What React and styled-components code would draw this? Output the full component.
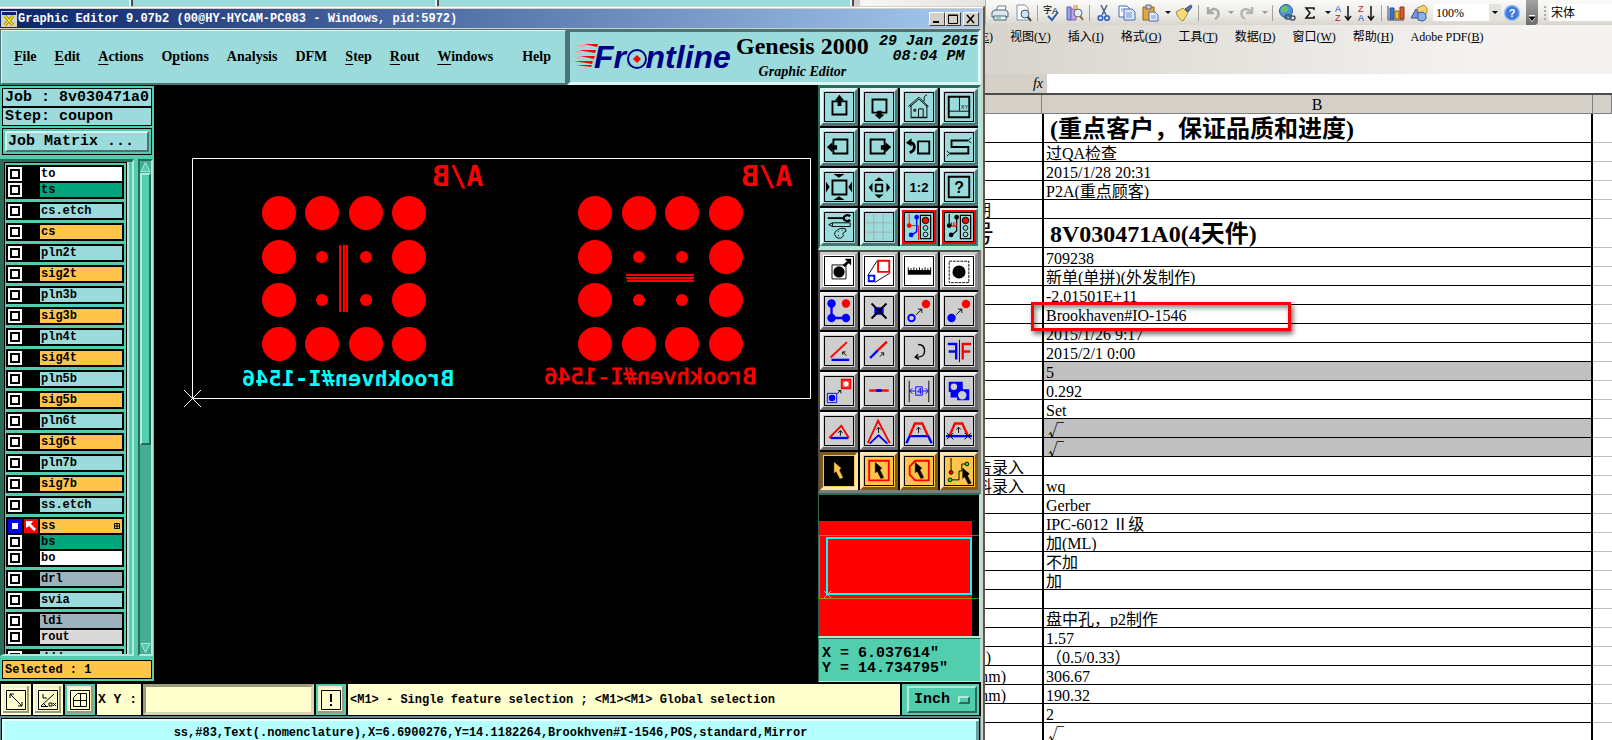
import React from "react";
import styled, { createGlobalStyle, css } from "styled-components";

const aqua = "#9cdbdb";
const teal = "#52ceae";
const tealDark = "#2b6b5a";
const tealLight = "#b2ead9";
const gold = "#ffc54a";
const cream = "#ffffce";
const face = "#d4d0c8";
const mono = '"Liberation Mono", "DejaVu Sans Mono", monospace';
const serif = '"Liberation Serif", "Noto Sans CJK SC", serif';

const layerGroups = [
  [["to", "#ffffff"], ["ts", "#00a57b"]],
  [["cs.etch", aqua]],
  [["cs", gold]],
  [["pln2t", aqua]],
  [["sig2t", gold]],
  [["pln3b", aqua]],
  [["sig3b", gold]],
  [["pln4t", aqua]],
  [["sig4t", gold]],
  [["pln5b", aqua]],
  [["sig5b", gold]],
  [["pln6t", aqua]],
  [["sig6t", gold]],
  [["pln7b", aqua]],
  [["sig7b", gold]],
  [["ss.etch", aqua]],
  [["ss", gold], ["bs", "#00a57b"], ["bo", "#ffffff"]],
  [["drl", "#9cb2bd"]],
  [["svia", aqua]],
  [["ldi", "#9cb2bd"], ["rout", "#d9d9d9"]],
  [["ddd", aqua]]
];

const menus = [
  ["F", "ile"],
  ["E", "dit"],
  ["A", "ctions"],
  ["", "O", "p", "tions"],
  ["", "Analysis"],
  ["", "DFM"],
  ["S", "tep"],
  ["R", "out"],
  ["W", "indows"]
];

const sheetMenus = [
  ["视图", "V"],
  ["插入", "I"],
  ["格式", "O"],
  ["工具", "T"],
  ["数据", "D"],
  ["窗口", "W"],
  ["帮助", "H"],
  ["Adobe PDF", "B"]
];

const sheetRows = [
  { b: "(重点客户，保证品质和进度)", big: true },
  { b: "过QA检查" },
  { b: "2015/1/28 20:31" },
  { b: "P2A(重点顾客)" },
  { a: "期", pad: 51 },
  { a: "号", pad: 48, b: "8V030471A0(4天件)", big: true },
  { b: "709238" },
  { b: "新单(单拼)(外发制作)" },
  { b: "-2.01501E+11" },
  { b: "Brookhaven#IO-1546", marked: true },
  { b: "2015/1/26 9:17" },
  { b: "2015/2/1 0:00" },
  { b: "5", grey: true },
  { b: "0.292" },
  { b: "Set" },
  { b: "√", grey: true },
  { b: "√", grey: true },
  { a: "告录入", pad: 18 },
  { a: "料录入", pad: 18, b: "wq" },
  { b: "Gerber" },
  { b: "IPC-6012 Ⅱ级" },
  { b: "加(ML)" },
  { b: "不加" },
  { b: "加" },
  {},
  { b: "盘中孔，p2制作" },
  { b: "1.57" },
  { a: ")", pad: 51, b: "（0.5/0.33）" },
  { a: "mm)", pad: 36, b: "306.67" },
  { a: "mm)", pad: 36, b: "190.32" },
  { b: "2" },
  { b: "√" }
];

const Ln = ({ d, c = "#000", w = 1 }) => (
  <path d={d} stroke={c} strokeWidth={w} fill="none" />
);
const Dot = ({ x, y, r, c = "#000" }) => <circle cx={x} cy={y} r={r} fill={c} />;
const Cursor = ({ x = 11, y = 6, c = "#000" }) => (
  <path
    d={`M${x} ${y}l7 6-2 2 4 8-3 1-4-8-2 2z`}
    fill={c}
    stroke={c}
    strokeWidth="0.6"
  />
);

const viewTools = [
  ["Pan up", <><Ln w={2} d="M8 9h15v14H8z" /><path d="M15.500 1l5 6h-3v6h-4V7h-3z" transform="translate(0 1)" /></>],
  ["Pan down", <><Ln w={2} d="M8 7h15v14H8z" /><path d="M13 19h5v4h3l-5.500 5L10 23h3z" /></>],
  ["Home", <><Ln d="M3.500 14.500L15 4.500l10 10M6.500 13v13h17V13M14.500 26v-9h5v9M9.500 17.500h2v2h-2z" /><Ln d="M5 15L15 6.500 24 15M6 26.500h18" /><Ln d="M20.500 9V5l1-2 2-1" /></>],
  ["Zoom area", <><Ln w={2} d="M4 4h22v22H4z" /><Ln d="M15.500 4v15M4 19.500h22" /><text x="17" y="17" fontSize="6" fontFamily="Liberation Sans">XY</text></>],
  ["Pan left", <><Ln w={2} d="M9 7h15v15H9z" /><path d="M2 15l6-5v3h5v5H8v3z" /></>],
  ["Pan right", <><Ln w={2} d="M6 7h15v15H6z" /><path d="M28 15l-6-5v3h-5v5h5v3z" /></>],
  ["Previous view", <><Ln w={2} d="M14 9h12v13H14z" /><Ln w={3} d="M6 10.500q4 0 4 4.500t-5 6" /><path d="M1 10.500l6-5v9z" /></>],
  ["Serpentine", <><Ln w={2} d="M25 8H7v7h18v7H5" /><Ln d="M25 8l3-3M25 8l3 3M5 22l-3-3M5 22l-3 3" /></>],
  ["Zoom in", <><Ln w={2} d="M8 8h15v15H8z" /><path d="M9 1h12l-6 4zM9 29h12l-6-4zM1 9v12l4-6zM29 9v12l-4-6z" /></>],
  ["Zoom out", <><Ln w={2} d="M11.500 12.500h7v7h-7z" /><path d="M15 4.500l5 4H10zM15 27l5-4H10zM4 15.500l4-5v10zM27 15.500l-4-5v10z" /></>],
  ["Scale", <text x="15" y="20" textAnchor="middle" fontSize="14" fontWeight="700" fontFamily="Liberation Sans">1:2</text>],
  ["Help", <><Ln w={2} d="M4 4h22v22H4z" /><text x="15" y="21" textAnchor="middle" fontSize="17" fontWeight="700" fontFamily="Liberation Sans">?</text></>],
  ["Setup", <><Ln w={2} d="M3 5.500h17" /><Ln w={2.5} d="M27 3.500a4 3 0 1 0 0 4" /><Ln d="M4 12.500l4-2h19v4H8zM8 10.500v4" /><Ln d="M11 20q5-5 11-3 2 3-2 4-2 2 0 3-3 5-8 2-3-3-1-6z" /><Ln d="M14 20h1M18 18.500h1M14 24h1" /></>],
  ["Grid", <Ln c="#aaaaaa" d="M9.500 1v28M19.500 1v28M1 10.500h28M1 20.500h28" />],
  ["Net check", <><Ln c="#f00" d="M4.500 1v12.500h10V29" /><Ln w={1.5} c="#00f" d="M12.500 4v16l-5 3.500" /><Dot x={4.500} y={13.500} r={2.500} c="#f00" /><Dot x={12.500} y={4.500} r={2.500} c="#00f" /><Dot x={6.500} y={23.500} r={2.500} c="#00f" /><Ln w={1.3} d="M16.500 2.500h11v25h-11z" /><circle cx="22" cy="8" r="3.500" fill="#f00" stroke="#000" /><circle cx="22" cy="16" r="2.500" fill="none" stroke="#000" /><circle cx="22" cy="23" r="2.500" fill="none" stroke="#000" /></>, true],
  ["Clearance check", <><Ln w={1.3} d="M4.500 1v12M12.500 4v15L7 24" /><Ln c="#f00" w={1.2} d="M7 10v4h5M9.500 10v4M12 10v4" /><Dot x={4.500} y={13.500} r={2.500} /><Dot x={12.500} y={4.500} r={2.500} /><Dot x={6.500} y={23.500} r={2.500} /><Ln w={1.3} d="M16.500 2.500h11v25h-11z" /><circle cx="22" cy="8" r="3.500" fill="#f00" stroke="#000" /><circle cx="22" cy="16" r="2.500" fill="none" stroke="#000" /><circle cx="22" cy="23" r="2.500" fill="none" stroke="#000" /></>, true]
];

const editTools = [
  ["Move", "white", <><Ln d="M7.500 8.500h15v15h-15z" /><Dot x={15} y={16} r={6} /><Ln w={3} d="M20 10l5-5" /><path d="M21 2h7v7z" /></>],
  ["Stretch", "white", <><Ln d="M13 4L3 20M27 17L11 27" /><Ln w={2} c="#f00" d="M14 4h12v12H14z" /><Ln w={2} c="#00f" d="M4 20h6v6H4z" /></>],
  ["Measure", "white", <><path d="M3 14h25v5H3z" /><Ln d="M3.500 11v4M6.500 12v3M9.500 11v4M12.500 12v3M15.500 11v4M18.500 12v3M21.500 11v4M24.500 12v3M27.500 11v4" /></>],
  ["Select frame", "white", <><path d="M4.500 4.500h21v23h-21z" fill="none" stroke="#000" strokeDasharray="3 1" /><Dot x={15} y={16} r={7} /></>],
  ["Add connection", "grey", <><Ln w={2.500} c="#00f" d="M7 7v15.500h15.500" /><Dot x={7} y={7} r={4.500} c="#00f" /><Dot x={7} y={22.500} r={4.500} c="#00f" /><Dot x={22.500} y={22.500} r={4.500} c="#00f" /><Dot x={22.500} y={7} r={4.500} c="#f00" /></>],
  ["Delete", "grey", <><path d="M10 11h10v8H10z" fill="#00f" /><Ln w={2} d="M7 7l16 16M23 7L7 23" /></>],
  ["Move node", "grey", <><circle cx="7" cy="22.500" r="3.500" fill="none" stroke="#00f" strokeWidth="2" /><Dot x={22.500} y={7.500} r={4.500} c="#f00" /><Ln d="M12 19l6-6M14 13h4v4" /></>],
  ["Copy node", "grey", <><Dot x={7} y={22.500} r={4.500} c="#00f" /><Dot x={22.500} y={7.500} r={4.500} c="#f00" /><Ln d="M12 19l6-6M14 13h4v4" /></>],
  ["Rotate", "grey", <><Ln w={2} c="#f00" d="M6 22L23.500 5.500" /><Ln w={2.500} c="#00f" d="M7 24.500h19" /><Ln d="M23 20l-4-4M19 19v-3h3" /></>],
  ["Extend", "grey", <><Ln w={2.500} c="#00f" d="M5.500 22.500L14 14" /><Ln w={2.500} c="#f00" d="M14 14l9.500-9" /><Ln d="M16 21l4-4M17 17h3v3" /></>],
  ["Turn", "grey", <><Ln w={1.500} d="M14 8q7 0 7 7t-9 6.500M14 18.500l-3 3 4 2.500" /></>],
  ["Mirror", "grey", <><Ln d="M15.500 3v24" /><Ln w={2.500} c="#00f" d="M3 7.500h9V24M12 15.500H4" /><Ln w={2.500} c="#f00" d="M28 7.500h-9V24M19 15.500h8" /></>],
  ["Replace pad", "grey", <><Ln w={2} c="#f00" d="M18 3h9v9h-9z" /><circle cx="22.500" cy="7.500" r="3.500" fill="#fff" stroke="#f00" /><Ln c="#00f" d="M2.500 17.500h10v10h-10z" /><Dot x={7.500} y={22.500} r={3.500} c="#00f" /><Ln d="M13 18l4-4M14 14.500h3v3" /></>],
  ["Break line", "grey", <><Ln w={2.500} c="#f00" d="M4.500 14.500h21" /><Ln w={3} c="#00f" d="M12 14.500h6" /></>],
  ["Spacing", "grey", <><Ln d="M4.500 4v23M25.500 4v23" /><Ln c="#00f" d="M11.500 10.500h7v9h-7zM11 15H5M19 15h6M8 12l-3 3 3 3M22 12l3 3-3 3M16.500 18v-6l-3 4h4" /></>],
  ["Substitute", "grey", <><path d="M4 5h15v11H4zM13 13h13v12H13z" fill="#00f" /><path d="M6 16h8v6H6z" fill="#00f" /><Dot x={9.500} y={10.500} r={3.500} c="#cecece" /><Dot x={18.500} y={19.500} r={4.500} c="#cecece" /></>],
  ["Fill triangle", "grey", <><Ln w={2.500} c="#00f" d="M6 22.500h19" /><Ln w={2} c="#f00" d="M4.500 22.500l13-13 8 13" /><Ln d="M16.500 20v-5M14 17l2.500-2.500L19 17" /></>],
  ["Sharp corner", "grey", <><Ln w={2} c="#f00" d="M3 28L14 4l12.500 24" /><Ln w={2} c="#00f" d="M5 28.500l9.500-9L24 28.500" /><Ln d="M14.500 17v-6M12 13.500l2.500-2.500 2.500 2.500" /></>],
  ["Chamfer", "grey", <><Ln w={2.500} c="#00f" d="M1.500 28L5 20.500h20l3.500 7.500" /><Ln w={2.500} c="#f00" d="M5 20l5.500-13h8L24.500 20" /><Ln d="M14.500 17v-6M12 13.500l2.500-2.500 2.500 2.500" /></>],
  ["Trim", "grey", <><Ln w={2.500} c="#f00" d="M5 20l5.500-13h8L24.500 20" /><Ln w={2.500} c="#00f" d="M1 20.500h28" /><Ln d="M14.500 17v-6M12 13.500l2.500-2.500 2.500 2.500M2 17l7 7M9 17l-7 7M21 17l7 7M28 17l-7 7" /></>],
  ["Select single", "gold", <><path d="M0 0h30v30H0z" /><Cursor c="#ffc54a" x={10} /></>],
  ["Select box", "gold", <><Ln w={2} c="#f00" d="M4.500 4h21v21h-21z" /><Cursor /></>],
  ["Select polygon", "gold", <><Ln w={2} c="#f00" d="M11 4h14.500v21H11l-6-6V10z" /><Cursor /></>],
  ["Select net", "gold", <><Ln d="M6.500 1v15M7 24.500h8V15h3V7.500h5" /><circle cx="6.500" cy="16.500" r="2" fill="#f00" stroke="#000" /><circle cx="23.500" cy="7.500" r="2" fill="#0f0" stroke="#000" /><circle cx="5.500" cy="24.500" r="2" fill="#0f0" stroke="#000" /><Cursor x={19} y={12} /></>]
];

/* spreadsheet toolbar: [label, drawing, has drop arrow, separator after] */
const sheetTools = [
  ["Print", <><path d="M5 7l2-5h8l-1 5" fill="#fff" stroke="#68809c" /><path d="M1 8l3-2h11l2 2v5H1z" fill="#dfe6ee" stroke="#45607c" /><path d="M3 12h12v4H3z" fill="#f4f7fa" stroke="#45607c" /><path d="M5 14h5" stroke="#4a6" /></>],
  ["Preview", <><path d="M3 1h8l3 3v12H3z" fill="#fff" stroke="#7f92a8" /><circle cx="11" cy="10" r="4" fill="#cfe4f7" stroke="#456" /><path d="M14 13l3 4" stroke="#432" strokeWidth="2" /></>, false, true],
  ["Spelling", <><text x="0" y="9" fontSize="9" fontFamily="Noto Sans CJK SC">字</text><text x="9" y="10" fontSize="9" fontFamily="Liberation Sans">A</text><path d="M5 12l4 4 6-8" fill="none" stroke="#2c5aa8" strokeWidth="2" /></>],
  ["Research", <><path d="M1 3h4v13H1z" fill="#98a2e0" stroke="#5561b5" /><path d="M5 5h5v11H5z" fill="#c2a5e0" stroke="#7561b5" /><path d="M7 1h5v4H7z" fill="#e8c060" /><circle cx="12" cy="9" r="4" fill="#e3effa" stroke="#667" /><path d="M14 12l3 4" stroke="#863" strokeWidth="2" /></>, false, true],
  ["Cut", <><path d="M6 1l5 10M12 1L7 11" stroke="#45618c" strokeWidth="1.500" /><circle cx="5.500" cy="14" r="2.300" fill="none" stroke="#2c62c8" strokeWidth="1.600" /><circle cx="12" cy="14" r="2.300" fill="none" stroke="#2c62c8" strokeWidth="1.600" /></>],
  ["Copy", <><path d="M1 2h8l2 2v9H1z" fill="#fff" stroke="#4668b5" /><path d="M6 5h8l3 3v8H6z" fill="#dce8fb" stroke="#4668b5" /><path d="M8 9h6M8 11h6M8 13h6M3 5h4M3 7h2" stroke="#6f92d8" /></>],
  ["Paste", <><path d="M2 3h11v13H2z" fill="#e0a83c" stroke="#97661a" /><path d="M5 1h5v4H5z" fill="#ccd" stroke="#667" /><path d="M8 8h6l3 3v6H8z" fill="#e6effc" stroke="#4668b5" /><path d="M10 12h5M10 14h5" stroke="#6f92d8" /></>, true],
  ["Format painter", <><path d="M1 8l7-4 5 5-5 8q-5-2-7-9z" fill="#f6dc7c" stroke="#a98c3c" /><path d="M10 5l6-4 1 2-4 5z" fill="#5c73a8" stroke="#3c4c78" /></>, false, true],
  ["Undo", <path d="M4 3v6h6M4 9q6-7 10-2 2 5-3 8" fill="none" stroke="#aaa" strokeWidth="2.500" />, true],
  ["Redo", <path d="M14 3v6H8M14 9Q8 2 4 7q-2 5 3 8" fill="none" stroke="#b4b4b4" strokeWidth="2.500" />, true, true],
  ["Hyperlink", <><circle cx="8" cy="7" r="6.500" fill="#4c94d8" stroke="#2c5c98" /><path d="M3 4q4-4 6-1 3 2 0 4-3 3-6 0z" fill="#6cc06c" /><rect x="7" y="11" width="6" height="4" rx="2" fill="none" stroke="#456" strokeWidth="1.500" /><rect x="12" y="12" width="5" height="4" rx="2" fill="none" stroke="#456" strokeWidth="1.500" /></>],
  ["Sum", <path d="M13 6V4H5l4 5-4 5h8v-2" fill="none" stroke="#111" strokeWidth="1.500" />, true],
  ["Sort ascending", <><text x="0" y="8" fontSize="9" fill="#24c" fontFamily="Liberation Sans">A</text><text x="0" y="17" fontSize="9" fill="#a22" fontFamily="Liberation Sans">Z</text><path d="M13 2v13M10 12l3 4 3-4" fill="none" stroke="#111" strokeWidth="1.500" /></>],
  ["Sort descending", <><text x="0" y="8" fontSize="9" fill="#a22" fontFamily="Liberation Sans">Z</text><text x="0" y="17" fontSize="9" fill="#24c" fontFamily="Liberation Sans">A</text><path d="M13 2v13M10 12l3 4 3-4" fill="none" stroke="#111" strokeWidth="1.500" /></>, false, true],
  ["Chart", <><path d="M1 2v14h16" fill="none" stroke="#346" /><path d="M3 4h4v11H3z" fill="#3c74d0" stroke="#24488c" /><path d="M8 7h4v8H8z" fill="#f0c040" stroke="#97661a" /><path d="M13 3h4v12h-4z" fill="#d85a2c" stroke="#8c3414" /></>],
  ["Drawing", <><path d="M7 4l7-3 3 3v5l-7 2z" fill="#f4d068" stroke="#a98c3c" /><path d="M1 14L6 5l4 9z" fill="#7c94dc" stroke="#3c4c98" /><path d="M8 9l5-1 3 3v4l-3 2-5-1z" fill="#8cb0ec" stroke="#3c5c98" /></>]
];

export default function App() {
  return (
    <Desktop>
      <GlobalStyle />
      <LeftSide>
        <BackStrip>
          <StripPanel $grow={130} />
          <StripPanel $grow={302} />
          <StripPanel $grow={411} />
          <StripSheet />
        </BackStrip>
        <EditorWindow>
          <TitleBar>
            <TitleIcon viewBox="0 0 16 16">
              <path d="M0 0h16v16H0z" fill="#d4d0c8" />
              <path d="M1 1h14v3H1z" fill="#0a246a" />
              <path d="M4 5l8 9M12 5l-8 9" stroke="#7c7c00" strokeWidth="3" />
              <path d="M4 5l8 9M12 5l-8 9" stroke="#f4f000" strokeWidth="1.500" />
            </TitleIcon>
            <h1>Graphic Editor 9.07b2 (00@HY-HYCAM-PC083 - Windows, pid:5972)</h1>
            <WinButton aria-label="Minimize">
              <svg viewBox="0 0 12 10"><path d="M2 8h6" stroke="#000" strokeWidth="2" /></svg>
            </WinButton>
            <WinButton aria-label="Maximize">
              <svg viewBox="0 0 12 10"><path d="M1.500 1h9v8.500h-9zM1 1.500h10" stroke="#000" fill="none" /></svg>
            </WinButton>
            <WinButton aria-label="Close" $gap>
              <svg viewBox="0 0 12 10"><path d="M2 1l7 8M9 1L2 9" stroke="#000" strokeWidth="1.500" /></svg>
            </WinButton>
          </TitleBar>
          <Header>
            <MenuPanel>
              {menus.map(([key, a, under, rest]) => (
                <MenuButton key={key + a}>
                  {key && <u>{key}</u>}
                  {a}
                  {under && <u>{under}</u>}
                  {rest}
                </MenuButton>
              ))}
              <MenuButton $last>Help</MenuButton>
            </MenuPanel>
            <BrandPanel>
              <Logo />
              <Product>
                <strong>Genesis 2000</strong>
                <em>Graphic Editor</em>
              </Product>
              <Clock>
                29 Jan 2015
                <br />
                08:04 PM
              </Clock>
            </BrandPanel>
          </Header>
          <Work>
            <Sidebar>
              <InfoBox>Job : 8v030471a0</InfoBox>
              <InfoBox>Step: coupon</InfoBox>
              <MatrixFrame>
                <MatrixButton>Job Matrix ...</MatrixButton>
              </MatrixFrame>
              <ListArea>
                <ListFrame>
                  <ListInner>
                    {layerGroups.map((group) => (
                      <LayerGroup key={group[0][0]}>
                        {group.map(([name, color]) => (
                          <Layer key={name} name={name} color={color} />
                        ))}
                      </LayerGroup>
                    ))}
                  </ListInner>
                </ListFrame>
                <Scrollbar>
                  <svg viewBox="0 0 12 12"><path d="M6 1l5 10H1z" fill="#52ceae" stroke="#b2ead9" /></svg>
                  <Track><Thumb /></Track>
                  <svg viewBox="0 0 12 12"><path d="M6 11L1 1h10z" fill="#52ceae" stroke="#b2ead9" /></svg>
                </Scrollbar>
              </ListArea>
              <SelectedBox>Selected : 1</SelectedBox>
            </Sidebar>
            <Canvas />
            <ToolColumn>
              <ViewGrid>
                {viewTools.map(([label, art, alert]) => (
                  <ToolButton key={label} aria-label={label} $alert={alert}>
                    <svg viewBox="0 0 30 30">{art}</svg>
                  </ToolButton>
                ))}
              </ViewGrid>
              <EditGrid>
                {editTools.map(([label, tone, art]) => (
                  <ToolButton key={label} aria-label={label} $tone={tone} $down={label === "Select single"}>
                    <svg viewBox="0 0 30 30">{art}</svg>
                  </ToolButton>
                ))}
              </EditGrid>
              <Preview>
                <svg viewBox="0 0 160 141" preserveAspectRatio="none">
                  <path d="M0 26h153v115H0z" fill="#f00" />
                  <path d="M.5 40.500h152.500M.5 40v63M.5 103.500h152.500" stroke="#a08c00" fill="none" />
                  <path d="M153 40.500h7M153 103.500h7" stroke="#3a8c00" />
                  <path d="M8 43h144v56H8z" fill="none" stroke="#0ff" strokeWidth="2" />
                  <path d="M5 96l7 7M12 96l-7 7" stroke="#0ff" />
                </svg>
              </Preview>
              <Coords>
                X = 6.037614"
                <br />
                Y = 14.734795"
              </Coords>
            </ToolColumn>
          </Work>
          <CommandBar>
            <CommandButton aria-label="Snap">
              <svg viewBox="0 0 20 20"><path d="M.5.5h19v19H.5zM4 4l12 12M4 8V4h4M16 12v4h-4" fill="none" stroke="#000" /></svg>
            </CommandButton>
            <CommandButton aria-label="Angle">
              <svg viewBox="0 0 20 20"><path d="M.5.5h19v19H.5zM3 16L16 4M5 4v4h4M8 16l-3-3M3 16.500h7M11 13h3v3h-3zM15 13l3 3M18 13l-3 3" fill="none" stroke="#000" /></svg>
            </CommandButton>
            <CommandButton aria-label="Grid snap" $teal>
              <svg viewBox="0 0 20 20"><path d="M.5.5h19v19H.5zM3.500 16.500v-9l4-4h9v13zM10.500 3v14M3 10.500h14" fill="none" stroke="#000" /></svg>
            </CommandButton>
            <XyLabel htmlFor="xy">X Y :</XyLabel>
            <XyInput id="xy" />
            <CommandButton aria-label="Apply" $teal>
              <svg viewBox="0 0 20 20"><path d="M.5.5h19v19H.5z" fill="none" stroke="#000" /><path d="M10 4v8M10 14v2" stroke="#000" strokeWidth="2" /></svg>
            </CommandButton>
            <Prompt>&lt;M1&gt; - Single feature selection ; &lt;M1&gt;&lt;M1&gt; Global selection</Prompt>
            <UnitPanel>
              <button>Inch<i /></button>
            </UnitPanel>
          </CommandBar>
          <StatusBar>
            <p>ss,#83,Text(.nomenclature),X=6.6900276,Y=14.1182264,Brookhven#I-1546,POS,standard,Mirror</p>
          </StatusBar>
        </EditorWindow>
      </LeftSide>
      <Sheet />
    </Desktop>
  );
}

function Logo() {
  return (
    <LogoArt viewBox="0 0 162 32" role="img" aria-label="Frontline">
      <path d="M10 3h14l-1 3zM4 9h18l-1 3zM6 15h15l-1 3zM0 20h19l-1 3zM2 24h16l-1 2z" fill="#f00" />
      <path d="M12 3l-12 2 10 1zM6 9l-6 2 6 1zM6 15l-5 2 5 1z" fill="#ff9a9a" />
      <text x="20" y="27" fontFamily="Liberation Sans, sans-serif" fontWeight="700" fontStyle="italic" fontSize="32" fill="#000084">
        Frontline
      </text>
      <circle cx="63" cy="18" r="11" fill={aqua} />
      <circle cx="63" cy="18" r="9" fill={aqua} stroke="#000084" strokeWidth="2" />
      <path d="M63 14l4 4-4 4-4-4z" fill="#f00" />
    </LogoArt>
  );
}

function Layer({ name, color }) {
  const active = name === "ss";
  return (
    <LayerRow>
      <Tick type="checkbox" aria-label={name} $active={active} />
      <Marker $active={active}>
        {active && (
          <svg viewBox="0 0 14 14">
            <path d="M2 2h7L7 5l5 5-2 2-5-5-3 2z" fill="#fff" />
          </svg>
        )}
      </Marker>
      <LayerName $color={color}>
        {name}
        {active && (
          <svg viewBox="0 0 6 6">
            <path d="M.5.5h5v5h-5zM3 0v6M0 3h6" fill="none" stroke="#000" />
          </svg>
        )}
      </LayerName>
    </LayerRow>
  );
}

const rows = [128, 172, 215, 259];

function Coupon({ columns, children }) {
  return (
    <g fill="#f00">
      {rows.map((y, r) =>
        columns.map((x, c) => {
          const inner = (r === 1 || r === 2) && (c === 1 || c === 2);
          return <circle key={`${x}-${y}`} cx={x} cy={y} r={inner ? 6 : 17} />;
        })
      )}
      {children}
    </g>
  );
}

/* legends are plotted mirrored, as seen through the board */
function Legend({ x, y, size, color, children, bold }) {
  return (
    <text
      transform={`translate(${x} ${y}) scale(-1 1)`}
      textAnchor="middle"
      fontFamily="DejaVu Sans Mono, monospace"
      fontSize={size}
      fontWeight={bold ? 700 : 400}
      fill={color}
      stroke={color}
      strokeWidth={bold ? 0 : 0.8}
    >
      {children}
    </text>
  );
}

function Canvas() {
  return (
    <CanvasBox>
      <svg viewBox="0 0 664 598" preserveAspectRatio="xMinYMin meet">
        <path d="M38.500 73.500h618v240h-618z" fill="none" stroke="#fff" />
        <path d="M30 305l17 17M47 305l-17 17" stroke="#fff" />
        <Coupon columns={[125, 168, 212, 255]}>
          <path d="M185 160h2v67h-2zM189 160h2v67h-2zM192 160h2v67h-2z" />
        </Coupon>
        <Coupon columns={[441, 485, 528, 572]}>
          <path d="M472 189h68v2h-68zM472 192h68v2h-68zM473 195h67v2h-67z" />
        </Coupon>
        <Legend x={304} y={101} size={28} color="#f00" bold>A/B</Legend>
        <Legend x={613} y={101} size={28} color="#f00" bold>A/B</Legend>
        <Legend x={194} y={301} size={22} color="#0ff" bold>Brookhven#I-1546</Legend>
        <Legend x={496} y={299} size={22} color="#f00">Brookhven#I-1546</Legend>
      </svg>
    </CanvasBox>
  );
}

function Sheet() {
  return (
    <SheetWindow>
      <SheetTop>
        <SheetToolbar>
          {sheetTools.map(([label, art, drop, sep]) => (
            <React.Fragment key={label}>
              <SheetTool aria-label={label}>
                <svg viewBox="0 0 18 18">{art}</svg>
              </SheetTool>
              {drop && <DropArrow viewBox="0 0 11 6"><path d="M3 1h6L6 4z" fill={label.endsWith("do") ? "#999" : "#111"} /></DropArrow>}
              {sep && <Separator />}
            </React.Fragment>
          ))}
          <ZoomBox>
            <select aria-label="Zoom" defaultValue="100%"><option>100%</option></select>
            <DropArrow viewBox="0 0 11 6"><path d="M3 1h6L6 4z" /></DropArrow>
          </ZoomBox>
          <SheetTool aria-label="Help">
            <svg viewBox="0 0 18 18">
              <circle cx="9" cy="9" r="7.500" fill="#3c7ce0" stroke="#9cc0f0" strokeWidth="1.500" />
              <text x="9" y="13" textAnchor="middle" fontSize="11" fontWeight="700" fill="#fff" fontFamily="Liberation Sans">?</text>
            </svg>
          </SheetTool>
          <ToolbarEnd>
            <svg viewBox="0 0 11 9"><path d="M3 1.500h6" stroke="#fff" /><path d="M3 4h6L6 8z" fill="#fff" /><path d="M3 3h6L6 7z" /></svg>
          </ToolbarEnd>
          <FontBar>
            <Grip />
            <select aria-label="Font" defaultValue="宋体"><option>宋体</option></select>
          </FontBar>
        </SheetToolbar>
        <SheetMenu>
          <Clip><button>编辑(<u>E</u>)</button></Clip>
          {sheetMenus.map(([text, key]) => (
            <button key={key}>{text}(<u>{key}</u>)</button>
          ))}
        </SheetMenu>
      </SheetTop>
      <FormulaBar>
        <label htmlFor="formula">fx</label>
        <input id="formula" />
      </FormulaBar>
      <Grid>
        <colgroup>
          <col style={{ width: 57 }} />
          <col />
          <col style={{ width: 19 }} />
        </colgroup>
        <thead>
          <tr><th /><th>B</th><th /></tr>
        </thead>
        <tbody>
          {sheetRows.map((row, i) => (
            <Row key={i} $big={row.big} $grey={row.grey}>
              <td><Cut $pad={row.pad} $big={row.big}>{row.a}</Cut></td>
              <td>
                <CellText $big={row.big} $check={row.b === "√"}>{row.b}</CellText>
                {row.marked && <Highlight />}
              </td>
              <td />
            </Row>
          ))}
        </tbody>
      </Grid>
    </SheetWindow>
  );
}

const GlobalStyle = createGlobalStyle`
  * {
    box-sizing: border-box;
  }
  body {
    margin: 0;
    background: #ffffff;
    font-family: ${mono};
  }
  button, input, select {
    font: inherit;
    color: inherit;
    margin: 0;
    padding: 0;
    border: 0;
    border-radius: 0;
    background: none;
    appearance: none;
    outline: none;
  }
  svg {
    display: block;
  }
`;
const bevel = (light, dark, size = 2) => css`
  border: ${size}px solid;
  border-color: ${light} ${dark} ${dark} ${light};
`;
const Desktop = styled.main`
  display: flex;
  height: 100vh;
  overflow: hidden;
`;
const LeftSide = styled.div`
  flex: 985 1 0;
  min-width: 0;
  display: flex;
  flex-direction: column;
`;
const BackStrip = styled.div`
  display: flex;
  height: 6px;
  background: ${aqua};
`;
const StripPanel = styled.div`
  flex: ${(p) => p.$grow} 1 0;
  border-right: 2px solid #4c4c4c;
  box-shadow: inset -2px 0 #e4fafa;
`;
const StripSheet = styled.div`
  flex: 130 1 0;
  background: linear-gradient(90deg, ${face} 6px, #f6f6f4 6px, #e6e4e0);
`;
const EditorWindow = styled.section`
  flex: 1;
  min-height: 0;
  display: flex;
  flex-direction: column;
  border-top: 1px solid ${face};
  border-right: 2px solid #5c5852;
  padding: 2px 2px 0 0;
  background: ${face};
  box-shadow: inset 0 1px #ffffff;
`;
const TitleBar = styled.header`
  display: flex;
  align-items: center;
  height: 19px;
  margin-bottom: 1px;
  padding: 0 2px 0 1px;
  background: linear-gradient(90deg, #0a246a, #a6caf0);
  h1 {
    flex: 1;
    margin: 0 0 0 1px;
    font-size: 12px;
    line-height: 18px;
    font-weight: 700;
    color: #ffffff;
    white-space: nowrap;
  }
`;
const TitleIcon = styled.svg`
  width: 16px;
  height: 16px;
`;
const WinButton = styled.button`
  width: 16px;
  height: 14px;
  margin-left: ${(p) => (p.$gap ? 2 : 0)}px;
  && {
    padding: 1px;
    background: ${face};
    ${bevel("#ffffff", "#404040", 1)}
  }
  svg {
    width: 12px;
    height: 10px;
  }
`;
const Header = styled.div`
  display: flex;
  height: 56px;
  background: ${aqua};
`;
const MenuPanel = styled.nav`
  flex: 537 1 0;
  display: flex;
  align-items: center;
  gap: 18px;
  padding: 0 14px 0 12px;
  ${bevel("#dcf6f6", "#4c7474", 2)}
  outline: 1px solid #4c7474;
  outline-offset: -1px;
`;
const MenuButton = styled.button`
  margin-left: ${(p) => (p.$last ? "auto" : 0)};
  font: 700 14px/18px "Liberation Serif", serif;
  u {
    text-underline-offset: 3px;
  }
`;
const BrandPanel = styled.div`
  flex: 404 1 0;
  display: flex;
  align-items: flex-start;
  padding-left: 4px;
  ${bevel("#4c7474", "#dcf6f6", 3)}
`;
const LogoArt = styled.svg`
  width: 162px;
  height: 32px;
  margin-top: 9px;
  flex: none;
`;
const Product = styled.div`
  display: flex;
  flex-direction: column;
  align-items: center;
  font-family: "Liberation Serif", serif;
  white-space: nowrap;
  strong {
    font-size: 24px;
    line-height: 28px;
  }
  em {
    font-size: 14px;
    line-height: 24px;
    font-weight: 700;
  }
`;
const Clock = styled.div`
  margin-left: auto;
  padding-top: 2px;
  font-size: 15px;
  line-height: 15px;
  font-style: italic;
  font-weight: 700;
  text-align: center;
  white-space: nowrap;
`;
const Work = styled.div`
  flex: 1;
  min-height: 0;
  display: flex;
  background: #000000;
`;
const Sidebar = styled.aside`
  flex: none;
  width: 154px;
  display: flex;
  flex-direction: column;
  padding-top: 2px;
  border-top: 1px solid #000000;
  margin-bottom: 2px;
  background: ${teal};
`;
const InfoBox = styled.div`
  height: 19px;
  margin: 0 2px;
  padding-left: 2px;
  border: 1px solid #000000;
  background: ${aqua};
  font-size: 15px;
  line-height: 17px;
  font-weight: 700;
  white-space: nowrap;
`;
const MatrixFrame = styled.div`
  margin: 2px 2px 4px;
  padding: 2px;
  border: 1px solid #000000;
`;
const MatrixButton = styled.button`
  display: block;
  width: 100%;
  height: 21px;
  && {
    padding-left: 1px;
    background: ${aqua};
    ${bevel("#dcf6f6", "#4c7474", 2)}
  }
  font-size: 15px;
  line-height: 17px;
  font-weight: 700;
  text-align: left;
`;
const ListArea = styled.div`
  flex: 1;
  min-height: 0;
  display: flex;
  gap: 4px;
`;
const ListFrame = styled.div`
  flex: 1;
  display: flex;
  border: solid;
  border-width: 3px 2px 2px 4px;
  border-color: ${tealDark} ${tealLight} ${tealLight} ${tealDark};
  padding-right: 5px;
`;
const ListInner = styled.div`
  flex: 1;
  display: flex;
  flex-direction: column;
  gap: 3px;
  padding: 2px 2px 0 1px;
  border: 1px solid #000000;
  border-bottom: 0;
  box-shadow: 2px 0 ${tealLight};
  overflow: hidden;
`;
const LayerGroup = styled.div`
  flex: none;
  display: grid;
  gap: 2px;
  padding: 2px;
  background: #000000;
`;
const LayerRow = styled.div`
  display: flex;
  gap: 2px;
  height: 14px;
`;
const Tick = styled.input`
  width: 14px;
  height: 14px;
  && {
    padding: 2px;
    border: 2px solid ${(p) => (p.$active ? "#0000ff" : "#ffffff")};
    background: linear-gradient(#ffffff, #ffffff) content-box,
      ${(p) => (p.$active ? "#0000ff" : "#000000")};
  }
`;
const Marker = styled.span`
  width: 14px;
  background: ${(p) => (p.$active ? "#ff0000" : "#000000")};
`;
const LayerName = styled.span`
  flex: 1;
  display: flex;
  align-items: center;
  justify-content: space-between;
  padding: 0 1px;
  background: ${(p) => p.$color};
  font-size: 12px;
  line-height: 14px;
  font-weight: 700;
  svg {
    width: 6px;
    height: 6px;
    margin-right: 1px;
  }
`;
const Scrollbar = styled.div`
  width: 15px;
  margin-right: 1px;
  display: flex;
  flex-direction: column;
  background: #44ae94;
  ${bevel(tealDark, tealLight, 2)}
  svg {
    width: 11px;
    height: 12px;
  }
`;
const Track = styled.div`
  flex: 1;
`;
const Thumb = styled.div`
  height: 58%;
  background: ${teal};
  ${bevel(tealLight, tealDark, 2)}
`;
const SelectedBox = styled.div`
  height: 19px;
  margin: 4px 2px 2px;
  padding-left: 2px;
  border: 1px solid #000000;
  background: ${gold};
  font-size: 12px;
  line-height: 18px;
  font-weight: 700;
`;
const CanvasBox = styled.div`
  flex: 1;
  min-width: 0;
  svg {
    width: 100%;
    height: 100%;
  }
`;
const ToolColumn = styled.aside`
  flex: none;
  width: 163px;
  display: flex;
  flex-direction: column;
`;
const ToolGrid = styled.div`
  display: grid;
  grid-template-columns: repeat(4, 38px);
  gap: 2px;
  background: #000000;
  border: solid;
`;
const ViewGrid = styled(ToolGrid)`
  border-width: 3px 3px 4px 2px;
  border-color: ${tealDark} ${tealLight} ${tealLight} ${tealDark};
`;
const EditGrid = styled(ToolGrid)`
  border-width: 2px 3px 3px 2px;
  border-color: #4c4c4c #7c7c7c #7c7c7c #4c4c4c;
`;
const tones = {
  white: ["#ffffff", "#cecece", "#8c8c8c"],
  grey: ["#cecece", "#efefef", "#6c6c6c"],
  gold: [gold, "#ffe8b4", "#7c5c1c"],
  aqua: [aqua, "#dcf6f6", "#4c7474"]
};
const ToolButton = styled.button`
  width: 38px;
  height: 38px;
  && {
    padding: 1px;
    background: ${(p) => tones[p.$tone || "aqua"][0]};
    border: 3px solid;
    border-color: ${(p) => {
      const [, light, dark] = tones[p.$tone || "aqua"];
      return p.$down ? `${dark} ${light} ${light} ${dark}` : `${light} ${dark} ${dark} ${light}`;
    }};
  }
  svg {
    width: 30px;
    height: 30px;
    border: 1px solid #000000;
    box-shadow: ${(p) => (p.$alert ? "0 0 0 2px #ff0000" : "none")};
    overflow: visible;
  }
`;
const Preview = styled.div`
  flex: 1;
  min-height: 0;
  border: solid;
  border-width: 2px 2px 2px 1px;
  border-color: ${tealDark} ${tealLight} ${tealLight} ${tealDark};
  svg {
    width: 100%;
    height: 100%;
  }
`;
const Coords = styled.div`
  height: 44px;
  margin-bottom: 1px;
  padding: 7px 0 0 3px;
  background: ${teal};
  ${bevel(tealDark, tealLight, 1)}
  font-size: 15px;
  line-height: 15px;
  font-weight: 700;
`;
const CommandBar = styled.div`
  display: flex;
  gap: 2px;
  height: 33px;
  padding: 1px 2px 1px 1px;
  background: #000000;
  font-weight: 700;
`;
const CommandButton = styled.button`
  width: 30px;
  && {
    padding: 3px;
    background: ${cream};
    border: 2px solid ${(p) => (p.$teal ? teal : cream)};
    box-shadow: inset -2px -2px #9c9c7c, inset 2px 2px #efefce;
  }
  svg {
    width: 20px;
    height: 20px;
  }
`;
const XyLabel = styled.label`
  width: 44px;
  padding-left: 1px;
  background: ${cream};
  font-size: 13px;
  line-height: 32px;
  white-space: nowrap;
`;
const XyInput = styled.input`
  width: 171px;
  && {
    padding: 0 4px;
    background: ${cream};
    ${bevel("#9c9c7c", "#d6d6b4", 3)}
  }
`;
const Prompt = styled.div`
  flex: 1;
  padding-left: 2px;
  background: ${cream};
  font-size: 12px;
  line-height: 33px;
  white-space: nowrap;
  overflow: hidden;
`;
const UnitPanel = styled.div`
  width: 77px;
  padding: 2px 2px 2px 5px;
  background: ${teal};
  button {
    display: flex;
    align-items: center;
    justify-content: space-between;
    width: 100%;
    height: 27px;
    padding: 0 5px;
    ${bevel(tealLight, tealDark, 2)}
    font-size: 15px;
    font-weight: 700;
  }
  i {
    width: 12px;
    height: 8px;
    ${bevel(tealLight, tealDark, 2)}
  }
`;
const StatusBar = styled.footer`
  height: 24px;
  padding-top: 2px;
  background: #5c8c8c;
  overflow: hidden;
  p {
    height: 30px;
    margin: 0 1px;
    border: 1px solid #000000;
    background: #b5ffff;
    box-shadow: inset 2px 2px #e6ffff, inset -3px 0 #6c9c9c;
    font-size: 12px;
    line-height: 28px;
    font-weight: 700;
    text-align: center;
    white-space: nowrap;
  }
`;
const SheetWindow = styled.section`
  flex: 627 1 0;
  min-width: 0;
  overflow: hidden;
  font-family: ${serif};
`;
const SheetTop = styled.div`
  height: 74px;
  background: linear-gradient(90deg, #d8d4cc, #f4f3f1 80%);
`;
const SheetToolbar = styled.div`
  display: flex;
  align-items: center;
  height: 25px;
  padding-left: 3px;
  background: linear-gradient(#fafaf9, #eceae6 60%, #d8d5ce);
  border-left: 1px solid #b4b0a8;
`;
const SheetTool = styled.button`
  flex: none;
  width: 23px;
  && {
    padding-left: 2px;
  }
  svg {
    width: 18px;
    height: 18px;
  }
`;
const DropArrow = styled.svg`
  flex: none;
  width: 11px;
  height: 6px;
`;
const Separator = styled.i`
  flex: none;
  width: 1px;
  height: 16px;
  margin: 0 3px 0 2px;
  background: #a4a09a;
`;
const ZoomBox = styled.span`
  flex: none;
  display: flex;
  align-items: center;
  width: 68px;
  height: 17px;
  margin-left: 2px;
  padding-right: 1px;
  background: linear-gradient(90deg, #ffffff 56px, #e4e2dd 56px);
  select {
    flex: 1;
    padding-left: 3px;
    font-size: 12px;
  }
`;
const ToolbarEnd = styled.span`
  flex: none;
  align-self: stretch;
  display: flex;
  align-items: flex-end;
  width: 12px;
  margin-left: 2px;
  padding-bottom: 2px;
  background: linear-gradient(#a4a4a4, #6c6c6c);
  border-radius: 0 0 4px 0;
  svg {
    width: 11px;
    height: 9px;
  }
`;
const FontBar = styled.span`
  flex: 1;
  align-self: stretch;
  display: flex;
  align-items: center;
  margin-left: 4px;
  select {
    flex: 1;
    height: 17px;
    margin-left: 3px;
    padding-left: 2px;
    background: #ffffff;
    font-size: 12px;
  }
`;
const Grip = styled.i`
  width: 2px;
  height: 14px;
  margin-left: 2px;
  background: repeating-linear-gradient(#b0aca4 0 2px, transparent 2px 4px);
`;
const SheetMenu = styled.nav`
  display: flex;
  gap: 17px;
  padding-top: 3px;
  font-size: 12px;
  line-height: 18px;
  white-space: nowrap;
`;
const Clip = styled.span`
  display: flex;
  justify-content: flex-end;
  width: 8px;
  overflow: hidden;
`;
const FormulaBar = styled.div`
  display: flex;
  height: 21px;
  border-bottom: 2px solid #4c4c4c;
  background: ${face};
  label {
    width: 62px;
    padding-right: 4px;
    font-size: 14px;
    line-height: 19px;
    font-style: italic;
    text-align: right;
  }
  input {
    flex: 1;
    background: #ffffff;
  }
`;
const Grid = styled.table`
  width: 100%;
  table-layout: fixed;
  border-collapse: separate;
  border-spacing: 0;
  th {
    height: 19px;
    padding: 1px 0 0;
    border: 0 solid #808080;
    border-width: 0 1px 1px 0;
    background: ${face};
    font-size: 16px;
    line-height: 17px;
    font-weight: 400;
  }
`;
const Row = styled.tr`
  td {
    height: ${(p) => (p.$big ? 29 : 19)}px;
    padding: 0;
    border-bottom: 1px solid #000000;
    overflow: hidden;
  }
  td:nth-child(2) {
    position: relative;
    border-left: 2px solid #000000;
    border-right: 2px solid #000000;
    background: ${(p) => (p.$grey ? "#c0c0c0" : "#ffffff")};
    overflow: visible;
  }
  td:last-child {
    border-bottom-color: #c0c0c0;
  }
`;
const cellFont = css`
  height: ${(p) => (p.$big ? 28 : 18)}px;
  font-size: ${(p) => (p.$big ? 24 : 16)}px;
  line-height: ${(p) => (p.$big ? 31 : 21)}px;
  white-space: nowrap;
`;
const CellText = styled.div`
  ${cellFont}
  padding-left: ${(p) => (p.$big ? 6 : p.$check ? 4 : 2)}px;
  font-family: ${(p) => (p.$check ? '"Noto Sans CJK SC", sans-serif' : serif)};
  font-weight: ${(p) => (p.$big ? 700 : 400)};
`;
const Cut = styled.div`
  ${cellFont}
  display: flex;
  justify-content: flex-end;
  padding-right: ${(p) => p.$pad || 0}px;
  overflow: hidden;
`;
const Highlight = styled.span`
  position: absolute;
  z-index: 1;
  top: -3px;
  left: -13px;
  width: 260px;
  height: 29px;
  border: 3px solid #ff0000;
  box-shadow: 2px 3px 5px rgba(0, 0, 0, 0.6), inset 2px 3px 5px rgba(0, 0, 0, 0.45);
`;
